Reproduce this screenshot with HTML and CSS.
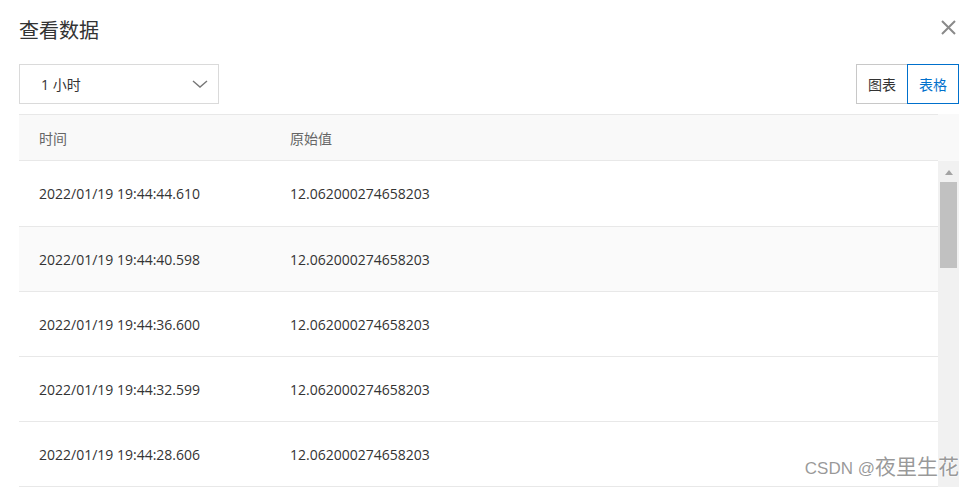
FILE: index.html
```html
<!DOCTYPE html>
<html lang="zh-CN">
<head>
<meta charset="utf-8">
<title>查看数据</title>
<link rel="stylesheet" href="styles.css">
</head>
<body>
<div class="dialog">
  <div class="title-bar">
    <h1 class="title">查看数据</h1>
    <svg class="close" width="15" height="15" viewBox="0 0 15 15" aria-label="关闭">
      <path d="M1 1 L14 14 M14 1 L1 14" stroke="#8a8a8a" stroke-width="2" fill="none"/>
    </svg>
  </div>
  <div class="toolbar">
    <div class="select">
      <span class="select-value">1 小时</span>
      <svg class="chevron" width="16" height="8" viewBox="0 0 16 8">
        <path d="M1 1 L8 7 L15 1" stroke="#777" stroke-width="1.4" fill="none"/>
      </svg>
    </div>
    <div class="btn-group">
      <button class="btn">图表</button>
      <button class="btn active">表格</button>
    </div>
  </div>
  <div class="table-wrap">
    <div class="table">
      <div class="thead">
        <div class="cell">时间</div>
        <div class="cell">原始值</div>
      </div>
      <div class="row">
        <div class="cell">2022/01/19 19:44:44.610</div>
        <div class="cell">12.062000274658203</div>
      </div>
      <div class="row hover">
        <div class="cell">2022/01/19 19:44:40.598</div>
        <div class="cell">12.062000274658203</div>
      </div>
      <div class="row">
        <div class="cell">2022/01/19 19:44:36.600</div>
        <div class="cell">12.062000274658203</div>
      </div>
      <div class="row">
        <div class="cell">2022/01/19 19:44:32.599</div>
        <div class="cell">12.062000274658203</div>
      </div>
      <div class="row">
        <div class="cell">2022/01/19 19:44:28.606</div>
        <div class="cell">12.062000274658203</div>
      </div>
    </div>
    <div class="gutter">
      <div class="gutter-head"></div>
      <div class="scrollbar">
        <div class="scroll-up"><span class="arrow"></span></div>
        <div class="thumb"></div>
      </div>
    </div>
  </div>
  <div class="watermark"><span class="wm-latin">CSDN @</span>夜里生花</div>
</div>
</body>
</html>
```
FILE: styles.css
```css
html, body {
  margin: 0;
  padding: 0;
  background: #fff;
}
body {
  font-family: "Open Sans", "Noto Sans CJK SC", sans-serif;
  color: #333;
}
.dialog {
  position: relative;
  width: 973px;
  height: 489px;
  box-sizing: border-box;
  padding: 0 14px 0 19px;
  overflow: hidden;
  background: #fff;
}
.title-bar {
  display: flex;
  justify-content: space-between;
  align-items: flex-start;
  height: 50px;
  box-sizing: border-box;
  padding-top: 10px;
}
.title {
  margin: 0;
  font-family: "Noto Sans CJK SC", sans-serif;
  font-weight: 400;
  font-size: 20px;
  line-height: 40px;
  color: #333;
}
.close {
  display: block;
  margin-top: 10px;
  margin-right: 3px;
}
.toolbar {
  display: flex;
  justify-content: space-between;
  align-items: center;
  margin-top: 14px;
  height: 40px;
}
.select {
  width: 200px;
  height: 40px;
  box-sizing: border-box;
  border: 1px solid #dadada;
  display: flex;
  align-items: center;
  justify-content: space-between;
  padding: 0 10px 0 21px;
}
.select-value {
  font-size: 14px;
  color: #333;
}
.chevron {
  display: block;
}
.btn-group {
  display: flex;
}
.btn {
  width: 52px;
  height: 40px;
  box-sizing: border-box;
  border: 1px solid #c8c8c8;
  background: #fff;
  font-family: "Noto Sans CJK SC", sans-serif;
  font-size: 14px;
  color: #333;
  padding: 0;
  margin: 0;
}
.btn + .btn {
  margin-left: -1px;
}
.btn.active {
  border-color: #0070cc;
  color: #0070cc;
  position: relative;
}
.table-wrap {
  display: flex;
  margin-top: 10px;
}
.table {
  width: 919px;
}
.thead, .row {
  display: grid;
  grid-template-columns: 251px 1fr;
  align-items: center;
  box-sizing: border-box;
}
.thead {
  height: 47px;
  background: #f9f9f9;
  border-top: 1px solid #e8e8e8;
  border-bottom: 1px solid #e8e8e8;
  color: #666;
}
.row {
  height: 65px;
  border-bottom: 1px solid #e8e8e8;
}
.row:nth-child(2) {
  height: 66px;
}
.row.hover {
  background: #fafafa;
}
.cell {
  padding-left: 20px;
  font-size: 14px;
  white-space: nowrap;
}
.thead .cell {
  font-family: "Noto Sans CJK SC", sans-serif;
  font-size: 14px;
}
.gutter {
  width: 21px;
  display: flex;
  flex-direction: column;
}
.gutter-head {
  height: 47px;
  background: #f9f9f9;
}
.scrollbar {
  flex: 1;
  background: #f1f1f1;
  display: flex;
  flex-direction: column;
  align-items: center;
}
.scroll-up {
  height: 21px;
  width: 21px;
  display: flex;
  justify-content: center;
  padding-top: 9px;
  box-sizing: border-box;
}
.arrow {
  width: 0;
  height: 0;
  border-left: 4.5px solid transparent;
  border-right: 4.5px solid transparent;
  border-bottom: 5px solid #a3a3a3;
}
.thumb {
  width: 17px;
  height: 86px;
  background: #c1c1c1;
}
.watermark {
  position: absolute;
  right: 14px;
  bottom: 8px;
  font-family: "Noto Sans CJK SC", sans-serif;
  font-size: 21px;
  line-height: 24px;
  color: rgba(120, 120, 120, 0.75);
  text-shadow: 0 0 2px #fff, 0 0 2px #fff;
}
.wm-latin {
  font-family: "Liberation Sans Narrow", "Liberation Sans", sans-serif;
  font-size: 17px;
}
```
